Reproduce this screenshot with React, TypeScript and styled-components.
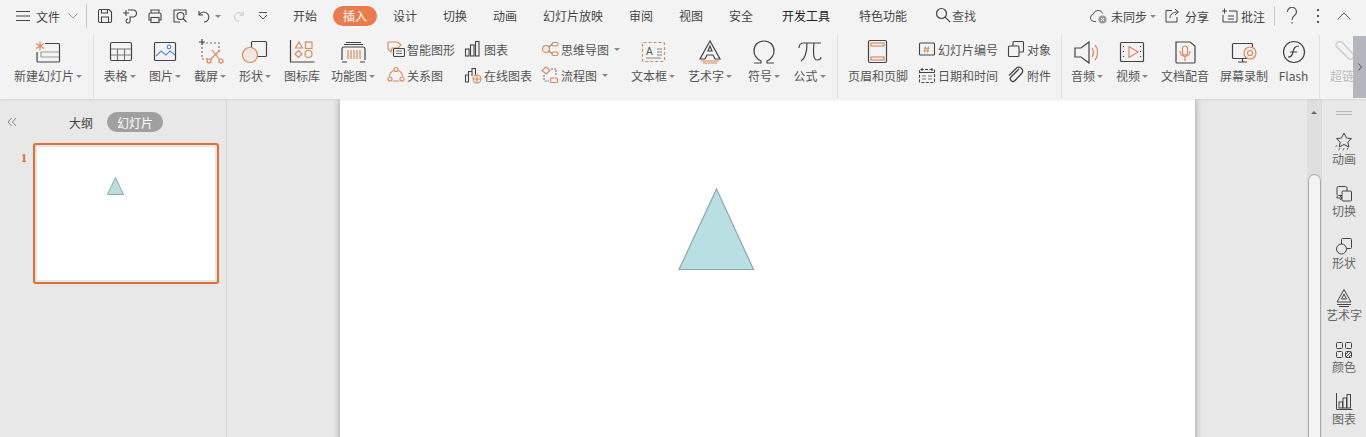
import React from "react";
import styled, { createGlobalStyle } from "styled-components";

const Global = createGlobalStyle`
  html, body { margin: 0; padding: 0; height: 100%; overflow: hidden; background: #e8e8e8; }
  #root { height: 437px; }
  * { box-sizing: border-box; }
  body { font-family: "Noto Sans CJK SC", "Liberation Sans", sans-serif; font-size: 12px; color: #444; }
  svg { display: block; flex: none; }
`;

const D = "#444";
const O = "#d98a5e";

const Page = styled.div`display:flex;flex-direction:column;width:1366px;height:437px;overflow:hidden;`;
const TopBar = styled.header`display:flex;align-items:center;height:32px;background:#f3f3f3;flex:none;`;
const FileMenu = styled.div`display:flex;align-items:center;padding-left:16px;gap:6px;width:86px;color:#444;`;
const VSep = styled.div<{ $h?: number }>`width:1px;height:${p => p.$h ?? 24}px;background:#c8c8c8;flex:none;`;
const QuickGroup = styled.div`display:flex;align-items:center;padding:0 4px 0 5px;width:193px;`;
const QuickBtn = styled.button<{ $w?: number }>`display:flex;align-items:center;justify-content:center;gap:2px;width:${p => p.$w ?? 25}px;height:24px;padding:0;border:0;background:none;`;
const Tab = styled.div<{ $w?: number; $active?: boolean; $strong?: boolean }>`
  width:${p => p.$w ?? 50}px;flex:none;display:flex;justify-content:center;line-height:20px;
  color:${p => (p.$strong ? "#222" : "#444")};
  span { padding:0 10px;border-radius:10px;white-space:nowrap;
    ${p => (p.$active ? "background:#e87c4e;color:#fff;" : "")} }
`;
const Search = styled.div`display:flex;align-items:center;gap:1px;margin-left:15px;color:#555;margin-top:-2px;`;
const TopRight = styled.div`display:flex;align-items:center;margin-left:auto;padding-right:9px;color:#444;`;
const TopAction = styled.div<{ $mr?: number }>`display:flex;align-items:center;gap:3px;margin-right:${p => p.$mr ?? 13}px;white-space:nowrap;`;
const VGap = styled.span`width:4px;flex:none;`;
const WinBtn = styled.button`width:26px;height:24px;padding:0;border:0;background:none;display:flex;align-items:center;justify-content:center;`;

const Ribbon = styled.section`position:relative;display:flex;height:67px;background:#f3f3f3;flex:none;overflow:hidden;box-shadow:0 1px 2px rgba(0,0,0,.08);z-index:2;`;
const Group = styled.div<{ $w: number; $pl?: number }>`display:flex;width:${p => p.$w}px;padding-left:${p => p.$pl ?? 0}px;flex:none;`;
const RibbonSep = styled.div`width:1px;margin:3px 0 1px;background:#dedede;flex:none;`;
const BigItem = styled.div<{ $w: number; $muted?: boolean }>`
  width:${p => p.$w}px;flex:none;display:flex;flex-direction:column;align-items:center;padding-top:6px;
  color:${p => (p.$muted ? "#bbb" : "#555")};white-space:nowrap;
`;
const BigLabel = styled.div`display:flex;align-items:center;gap:2px;height:16px;margin-top:2px;line-height:16px;`;
const Caret = styled.i<{ $c?: string }>`display:inline-block;width:0;height:0;border:3px solid transparent;border-top:3px solid ${p => p.$c ?? "#888"};border-bottom:0;flex:none;`;
const SmallCol = styled.div<{ $w: number; $pl?: number }>`width:${p => p.$w}px;padding-left:${p => p.$pl ?? 0}px;flex:none;display:flex;flex-direction:column;padding-top:4px;`;
const SmallItem = styled.div`display:flex;align-items:center;height:26px;gap:2px;color:#555;white-space:nowrap;`;
const SmallText = styled.span`margin-right:3px;`;
const Handle = styled.div`position:absolute;right:0;top:4px;bottom:1px;width:13px;background:#b4b6bd;display:flex;align-items:center;justify-content:center;`;

const Main = styled.main`flex:1;display:flex;min-height:0;`;
const SidePanel = styled.aside`width:227px;flex:none;background:#e8e8e8;border-right:1px solid #d8d8d8;display:flex;flex-direction:column;`;
const PanelHead = styled.div`display:flex;align-items:center;height:44px;padding:2px 0 0 7px;`;
const PanelTabs = styled.div`display:flex;align-items:center;margin-left:52px;gap:14px;color:#444;`;
const Pill = styled.span`width:56px;height:20px;border-radius:10px;background:#a0a0a0;color:#fff;display:flex;align-items:center;justify-content:center;`;
const ThumbRow = styled.div`display:flex;align-items:flex-start;padding-left:21px;`;
const ThumbNum = styled.span`width:12px;font:bold 12px/30px "Liberation Serif",serif;color:#d9672a;`;
const Thumb = styled.div`position:relative;width:186px;height:141px;border:2px solid #e0702e;border-radius:3px;background:#fff;box-shadow:inset 0 0 0 2px #e6e6e6;`;
const ThumbShape = styled.svg`position:absolute;left:72px;top:32px;`;
const Workspace = styled.div`flex:1;min-width:0;background:#e8e8e8;overflow:hidden;`;
const Slide = styled.div`position:relative;width:855px;height:360px;margin-left:113px;background:#fff;box-shadow:0 0 7px rgba(0,0,0,.35);`;
const SlideShape = styled.svg`position:absolute;left:337px;top:88px;`;
const Scroll = styled.div`width:14px;flex:none;background:#dfdfdf;display:flex;flex-direction:column;align-items:center;`;
const ScrollUp = styled.i`width:0;height:0;margin-top:12px;border:3px solid transparent;border-bottom:3px solid #666;border-top:0;`;
const ScrollThumb = styled.div`width:13px;flex:1;margin:60px 0 0 0;background:#f3f3f3;border:1px solid #aaa;border-bottom:0;border-radius:7px 7px 0 0;`;
const RightPanel = styled.aside`width:45px;flex:none;background:#e8e8e8;display:flex;flex-direction:column;align-items:center;border-left:1px solid #dcdcdc;`;
const Grip = styled.div`width:16px;height:4px;margin:12px 0 17px;border-top:1px solid #bbb;border-bottom:1px solid #bbb;flex:none;`;
const SideItem = styled.div`height:52px;flex:none;display:flex;flex-direction:column;align-items:center;color:#666;white-space:nowrap;line-height:14px;`;

type IP = { children: React.ReactNode };
const Big = ({ children }: IP) => <svg width="32" height="28" viewBox="0 0 32 28" fill="none" stroke={D} strokeWidth="1.2">{children}</svg>;
const Small = ({ children }: IP) => <svg width="18" height="18" viewBox="0 0 18 18" fill="none" stroke={D} strokeWidth="1.1">{children}</svg>;
const Side = ({ children }: IP) => <svg width="20" height="20" viewBox="0 0 20 20" fill="none" stroke={D} strokeWidth="1">{children}</svg>;

const bigs: Record<string, React.ReactNode> = {
  new: <><path d="M13 5.500H26.500a1 1 0 0 1 1 1V23a1 1 0 0 1-1 1H6a1 1 0 0 1-1-1V14" /><path d="M9 14h18M9 19h18M9 14v5" stroke="#999" /><path d="M8 3.500v9M4 5.500l8 5M12 5.500l-8 5" stroke={O} /></>,
  table: <><rect x="6.500" y="4.500" width="21" height="18" rx="1.500" /><path d="M7 11h20M7 17h20M13.500 11v11M20.500 11v11" stroke="#777" /></>,
  pic: <><rect x="5.500" y="4.500" width="21" height="18" rx="1" /><circle cx="20" cy="9" r="1.800" stroke="#5b8fd6" /><path d="M7 18l5-5 5 4 4-4 5 4" stroke="#5b8fd6" /></>,
  shot: <><path d="M8 5h17v11M8 9v12h8" stroke="#777" strokeDasharray="2 2" /><path d="M5 4h6M8 1v6" /><path d="M26 12l-10 10M18 12l8 10" stroke={O} /><circle cx="15" cy="23" r="2" stroke={O} /><circle cx="27" cy="23" r="2" stroke={O} /></>,
  shape: <><rect x="12.500" y="3.500" width="15" height="15" rx="1" /><circle cx="11" cy="17" r="7.500" fill="#f3e7e0" stroke={O} /></>,
  lib: <><path d="M4.500 2v22h24" /><path d="M13 4l3.500 6h-7z" stroke={O} /><rect x="19.500" y="4" width="6.500" height="6.500" stroke={O} /><path d="M12.500 12.500l3.500 3.500-3.500 3.500-3.500-3.500z" stroke={O} /><circle cx="22.500" cy="16" r="3.500" stroke={O} /></>,
  func: <><path d="M5 22v-11a2 2 0 0 1 2-2h19a2 2 0 0 1 2 2v11M5 24h5M23 24h5" /><path d="M7 6.500h19M9 4.500h15" /><path d="M11 12v9M14 12v9M17 12v9M20 12v9M23 12v9" stroke={O} /></>,
  text: <><rect x="5.500" y="4.500" width="22" height="19" rx="1" stroke={O} strokeDasharray="3 2" /><text x="9" y="17" fontSize="10" fill="#555" stroke="none" fontFamily="Liberation Sans">A</text><path d="M20 11h5M20 14h5M20 17h5M9 20h15" stroke="#888" /></>,
  art: <><path d="M16 3L6 21h5l2-4h6l2 4h5z" /><path d="M16 8l-2 5h4z" /><path d="M7 23h18M9 25h14" stroke={O} /></>,
  omega: <path d="M6 25h7v-2c-4-2-7-5-7-10 0-6 4-10 10-10s10 4 10 10c0 5-3 8-7 10v2h7" strokeWidth="1.200" />,
  pi: <path d="M5 10c0-3 2-5 5-5h17M13 5c0 8-1 15-6 18M20 5c-1 8-1 17 3 17 2 0 4-1 4-3" strokeWidth="1.200" />,
  header: <><rect x="6.500" y="2.500" width="18" height="22" rx="1.500" /><rect x="9" y="5" width="13" height="3" stroke={O} /><rect x="9" y="19" width="13" height="3" stroke={O} /></>,
  audio: <><path d="M4 10v9h6l8 6V4l-8 6z" /><path d="M21 10c2 3 2 6 0 9M24 7c3.500 4 3.500 11 0 15" stroke={O} /></>,
  video: <><rect x="4.500" y="4.500" width="23" height="19" rx="1" /><path d="M7.500 8v1M7.500 13v1M7.500 18v1M24.500 8v1M24.500 13v1M24.500 18v1" /><path d="M13 8.500v11l9-5.500z" stroke={O} /></>,
  voice: <><path d="M7 24V4h14l5 4v16a1 1 0 0 1-1 1H8a1 1 0 0 1-1-1z" /><rect x="13.500" y="8" width="5" height="9" rx="2.500" stroke={O} /><path d="M11 13c0 7 10 7 10 0M16 18v5" stroke={O} /></>,
  record: <><rect x="4.500" y="5.500" width="20" height="15" rx="1" /><path d="M10 24h9M14.500 20v4" /><circle cx="22" cy="15" r="6" fill="#f3f3f3" stroke={O} /><circle cx="22" cy="15" r="2.500" stroke={O} /></>,
  flash: <><circle cx="16" cy="14" r="10.500" /><path d="M10 19c3 0 4-1 5-5s2-6 6-6M12 14h7" /></>,
  clip: <path d="M4 8l12 12a3 3 0 0 0 5-4L10 4a4 4 0 0 0-6 4" stroke="#ccc" strokeWidth="1.500" />,
};

const smalls: Record<string, React.ReactNode> = {
  smart: <><path d="M1 2h10l3 3-3 3H5l-1 4-3-3z" stroke={O} /><rect x="6.500" y="8.500" width="11" height="8" rx="1" fill="#f3f3f3" /><path d="M9 11h6M9 13.500h6" stroke="#777" /></>,
  rel: <><circle cx="9" cy="3.500" r="2" stroke={O} /><circle cx="3" cy="13" r="2" stroke={O} /><circle cx="15" cy="13" r="2" stroke={O} /><path d="M6.500 4.500A7 7 0 0 0 2.500 10.500M11.500 4.500a7 7 0 0 1 4 6M5.500 15h7" stroke={O} /></>,
  chart: <><rect x="1.500" y="9" width="3.500" height="7" /><rect x="6.500" y="5" width="3.500" height="11" /><rect x="11.500" y="1.500" width="3.500" height="14.500" /></>,
  online: <><path d="M1.500 9h3v7h-3zM4.500 16V5.500h3.500V10M8 5.500V2.500h3.500V9" /><circle cx="13" cy="13" r="4" stroke={O} /><path d="M9 13h8M13 9v8" stroke={O} /></>,
  mind: <><circle cx="5" cy="9" r="3.500" stroke={O} fill="#f3e7e0" /><rect x="11" y="2.500" width="6" height="3.500" rx="1.500" stroke={O} /><rect x="11" y="12" width="6" height="3.500" rx="1.500" stroke={O} /><path d="M7.500 7l3.500-2.500M7.500 11l3.500 2.500" stroke="#888" /></>,
  flow: <><path d="M5 1l4 3.500L5 8 1 4.500z" stroke={O} /><rect x="9.500" y="12" width="7" height="4.500" rx="1" stroke={O} /><path d="M10 3h5v6M3 9v5a1 1 0 0 0 1 1h4" stroke="#777" strokeDasharray="2 1" /></>,
  num: <><rect x="1.500" y="3" width="15" height="12" rx="1" /><path d="M7.500 6.500l-1 6M10.500 6.500l-1 6M6 8.300h5.500M5.500 10.700h5.500" stroke={O} /></>,
  date: <><rect x="1.500" y="3.500" width="15" height="13" rx="1" strokeDasharray="3 1.500" /><path d="M4 2v3M14 2v3M1.500 6.500h15" /><path d="M4 10h4M10 10h4M4 13h4M10 13h4" stroke="#777" /></>,
  obj: <><rect x="6" y="1.500" width="10.500" height="10.500" rx="1" /><rect x="1.500" y="6" width="10.500" height="10.500" rx="1" fill="#f3f3f3" /></>,
  attach: <path d="M12 3L4 11a2.500 2.500 0 0 0 4 3.500l7-7.500a3.800 3.800 0 0 0-5.500-5L2 9.500" strokeWidth="1.300" />,
};

const bigRow = (k: string, label: string, w: number, caret = true, muted = false) => (
  <BigItem $w={w} $muted={muted} key={label}>
    <Big>{bigs[k]}</Big>
    <BigLabel>{label}{caret && <Caret />}</BigLabel>
  </BigItem>
);
const smallRow = (k: string, label: string, caret = false) => (
  <SmallItem key={label}>
    <Small>{smalls[k]}</Small>
    <SmallText>{label}</SmallText>
    {caret && <Caret />}
  </SmallItem>
);

const tabs: [string, number, boolean?, boolean?][] = [
  ["开始", 50], ["插入", 50, true], ["设计", 50], ["切换", 50], ["动画", 50], ["幻灯片放映", 86],
  ["审阅", 50], ["视图", 50], ["安全", 50], ["开发工具", 80, false, true], ["特色功能", 74],
];

const Q = ({ children }: IP) => <svg width="16" height="16" viewBox="0 0 16 16" fill="none" stroke={D} strokeWidth="1.100">{children}</svg>;

export default function App() {
  return (
    <Page>
      <Global />
      <TopBar>
        <FileMenu>
          <svg width="14" height="12" viewBox="0 0 14 12" stroke={D}><path d="M0 1.500h14M0 6h14M0 10.500h14" /></svg>
          <span>文件</span>
          <svg width="10" height="6" viewBox="0 0 10 6" fill="none" stroke="#999" style={{ marginLeft: 2 }}><path d="M0.500 0.500L5 5l4.500-4.500" /></svg>
        </FileMenu>
        <VSep />
        <QuickGroup>
          <QuickBtn><Q><path d="M1.500 3a1.500 1.500 0 0 1 1.500-1.500h9L14.500 4v9a1.500 1.500 0 0 1-1.500 1.500H3A1.500 1.500 0 0 1 1.500 13zM4.500 14V9h7v5M4.500 2v3h6V2" /></Q></QuickBtn>
          <QuickBtn><Q><path d="M1 5h6M4 2v6M6 2h5a3.500 3.500 0 0 1 0 7H8v3.500a2 2 0 1 1-2-1.500" /></Q></QuickBtn>
          <QuickBtn><Q><path d="M4 5V2h8v3M4 12H2V6.500A1.500 1.500 0 0 1 3.500 5h9A1.500 1.500 0 0 1 14 6.500V12h-2" /><rect x="4" y="9.500" width="8" height="5" /></Q></QuickBtn>
          <QuickBtn><Q><path d="M14 7V2H2v12h6" /><circle cx="8.500" cy="8" r="3.500" /><path d="M11 10.500l3.500 3.500" /></Q></QuickBtn>
          <QuickBtn $w={33}><Q><path d="M2 3v4h4M2.500 6.500A5 5 0 1 1 7 14" /></Q><Caret /></QuickBtn>
          <QuickBtn><svg width="14" height="14" viewBox="0 0 16 16" fill="none" stroke="#c4c4c4" strokeWidth="1.100"><path d="M14 3v4h-4M13.500 6.500A5 5 0 1 0 9 14" /></svg></QuickBtn>
          <QuickBtn><svg width="10" height="9" viewBox="0 0 10 9" fill="none" stroke="#555"><path d="M1 .5h8M1 3l4 4 4-4" /></svg></QuickBtn>
        </QuickGroup>
        {tabs.map(([t, w, a, s]) => <Tab key={t} $w={w} $active={a} $strong={s}><span>{t}</span></Tab>)}
        <Search>
          <svg width="16" height="16" viewBox="0 0 16 16" fill="none" stroke={D} strokeWidth="1.200"><circle cx="6.500" cy="6.500" r="5" /><path d="M10.200 10.200l5 5" /></svg>
          <span>查找</span>
        </Search>
        <TopRight>
          <TopAction $mr={8}>
            <svg width="18" height="18" viewBox="0 0 18 18" fill="none" stroke="#555"><path d="M6 14.500H4a3.700 3.700 0 0 1-.7-7.300A5 5 0 0 1 12.800 6.500" /><circle cx="12.500" cy="12.500" r="4" fill="#999" stroke="none" /><path d="M11 11l3 3M14 11l-3 3" stroke="#fff" /></svg>
            <span>未同步</span><Caret />
          </TopAction>
          <TopAction $mr={13}>
            <svg width="16" height="16" viewBox="0 0 16 16" fill="none" stroke={D} style={{ marginRight: 2 }}><path d="M8 2.500H2v11.500h11V9M6 10c0-4 3-6 8-6M11 1l3.500 3L11 7" /></svg>
            <span>分享</span>
          </TopAction>
          <TopAction $mr={9}>
            <svg width="16" height="16" viewBox="0 0 16 16" fill="none" stroke={D}><path d="M0 3h5M2.500 .5v5M7 3h8v11H1V7M6 8h6M6 11h6" /></svg>
            <span>批注</span>
          </TopAction>
          <VSep $h={20} />
          <VGap />
          <WinBtn><svg width="14" height="18" viewBox="0 0 14 18" fill="none" stroke="#555" strokeWidth="1.200"><path d="M2.500 5a4.500 4.500 0 1 1 7 3.500C8 9.500 7 10.500 7 13" /><path d="M7 15v1.500" /></svg></WinBtn>
          <WinBtn><svg width="4" height="14" viewBox="0 0 4 14" fill="#555"><rect x="1" y="0" width="2" height="2" /><rect x="1" y="6" width="2" height="2" /><rect x="1" y="12" width="2" height="2" /></svg></WinBtn>
          <WinBtn><svg width="14" height="8" viewBox="0 0 14 8" fill="none" stroke="#555"><path d="M.5 7.500L7 1l6.500 6.500" /></svg></WinBtn>
        </TopRight>
      </TopBar>

      <Ribbon>
        <Group $w={93} $pl={12}>{bigRow("new", "新建幻灯片", 72)}</Group>
        <RibbonSep />
        <Group $w={743}>
          {bigRow("table", "表格", 51)}
          {bigRow("pic", "图片", 40)}
          {bigRow("shot", "截屏", 50)}
          {bigRow("shape", "形状", 40)}
          {bigRow("lib", "图标库", 54, false)}
          {bigRow("func", "功能图", 48)}
          <SmallCol $w={87} $pl={10}>
            {smallRow("smart", "智能图形")}
            {smallRow("rel", "关系图")}
          </SmallCol>
          <SmallCol $w={77}>
            {smallRow("chart", "图表")}
            {smallRow("online", "在线图表")}
          </SmallCol>
          <SmallCol $w={84}>
            {smallRow("mind", "思维导图", true)}
            {smallRow("flow", "流程图", true)}
          </SmallCol>
          {bigRow("text", "文本框", 56)}
          {bigRow("art", "艺术字", 58)}
          {bigRow("omega", "符号", 50)}
          {bigRow("pi", "公式", 41)}
        </Group>
        <RibbonSep />
        <Group $w={223}>
          {bigRow("header", "页眉和页脚", 80, false)}
          <SmallCol $w={89}>
            {smallRow("num", "幻灯片编号")}
            {smallRow("date", "日期和时间")}
          </SmallCol>
          <SmallCol $w={54}>
            {smallRow("obj", "对象")}
            {smallRow("attach", "附件")}
          </SmallCol>
        </Group>
        <RibbonSep />
        <Group $w={257}>
          {bigRow("audio", "音频", 50)}
          {bigRow("video", "视频", 40)}
          {bigRow("voice", "文档配音", 66, false)}
          {bigRow("record", "屏幕录制", 52, false)}
          {bigRow("flash", "Flash", 47, false)}
        </Group>
        <RibbonSep />
        {bigRow("clip", "超链接", 56, false, true)}
        <Handle>
          <svg width="4" height="8" viewBox="0 0 4 8" fill="none" stroke="#555"><path d="M.5 .5L3.500 4 .5 7.500" /></svg>
        </Handle>
      </Ribbon>

      <Main>
        <SidePanel>
          <PanelHead>
            <svg width="10" height="10" viewBox="0 0 10 10" fill="none" stroke="#888"><path d="M4.500 1L1 5l3.500 4M9 1L5.500 5 9 9" /></svg>
            <PanelTabs><span>大纲</span><Pill>幻灯片</Pill></PanelTabs>
          </PanelHead>
          <ThumbRow>
            <ThumbNum>1</ThumbNum>
            <Thumb>
              <ThumbShape width="17" height="18" viewBox="0 0 17 18"><path d="M8.500 .5L16.500 17.500H.5z" fill="#b9dfe3" stroke="#8aa9ac" /></ThumbShape>
            </Thumb>
          </ThumbRow>
        </SidePanel>
        <Workspace>
          <Slide>
            <SlideShape width="78" height="84" viewBox="0 0 78 84"><path d="M39.500 2L76.500 82.500H2z" fill="#b9dfe3" stroke="#8aa9ac" strokeWidth="1.200" /></SlideShape>
          </Slide>
        </Workspace>
        <Scroll>
          <ScrollUp />
          <ScrollThumb />
        </Scroll>
        <RightPanel>
          <Grip />
          <SideItem>
            <Side><path d="M10 1l2.500 5 5 .6-3.700 3.400 1 5-4.800-2.500L5.200 15l1-5L2.500 6.600l5-.6z" /><path d="M3 13l-1.500 2M6 16l-1.500 2.500M10 16l-1 2.500M14 16l-1 2" stroke="#777" /></Side>
            动画
          </SideItem>
          <SideItem>
            <Side><rect x="3" y="2.500" width="10" height="9" rx="1.500" /><rect x="8" y="7" width="9.500" height="10" rx="1" fill="#e8e8e8" /><path d="M3 12v2h5M6 12l2 2-2 2" /></Side>
            切换
          </SideItem>
          <SideItem>
            <Side><rect x="7.500" y="2.500" width="10" height="10" rx="1" /><circle cx="7.500" cy="13" r="5" fill="#e8e8e8" /></Side>
            形状
          </SideItem>
          <SideItem>
            <Side><path d="M10 1.500L3 14h14z" /><path d="M10 6l-2.500 5h5z" /><path d="M3 16.500h14M5 18.500h10" /></Side>
            艺术字
          </SideItem>
          <SideItem>
            <Side><rect x="2.500" y="2.500" width="6" height="6" rx="1" /><rect x="11.500" y="2.500" width="6" height="6" rx="1" /><rect x="2.500" y="11.500" width="6" height="6" rx="1" /><rect x="11.500" y="11.500" width="6" height="6" rx="1" /><path d="M12 17l5-5M14 18l3-3M12 14l2-2" /></Side>
            颜色
          </SideItem>
          <SideItem>
            <Side><path d="M2.500 1v16.500h16" /><rect x="5" y="10" width="3.500" height="6" /><rect x="9" y="6" width="3.500" height="10" /><rect x="13" y="2.500" width="3.500" height="13.500" /></Side>
            图表
          </SideItem>
        </RightPanel>
      </Main>
    </Page>
  );
}
